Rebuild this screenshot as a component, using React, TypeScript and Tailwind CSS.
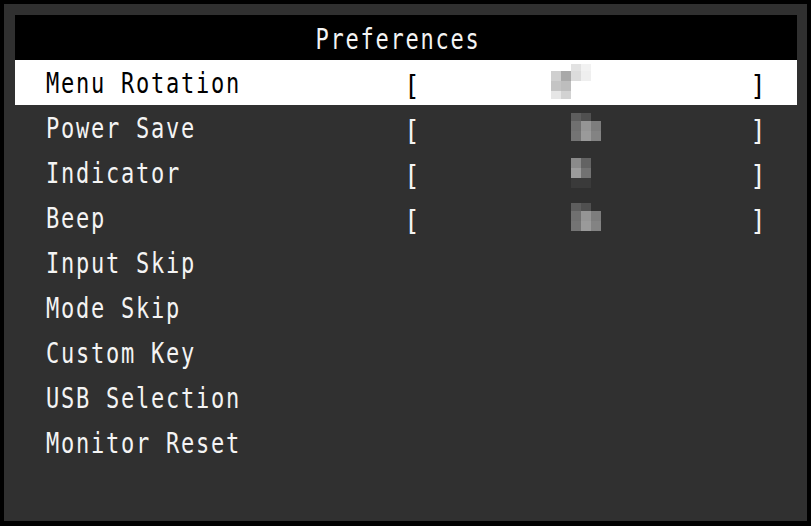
import React from 'react';

type Cell = [number, number, number, number, string];

// pixelated (censored) value previews, coords relative to a 50x36 box
const mosaics: Record<string, Cell[]> = {
  rotation: [
    [20, 0, 10, 7, '#e2e2e2'],
    [30, 0, 10, 7, '#f2f2f2'],
    [0, 7, 10, 10, '#cfcfcf'],
    [10, 7, 10, 10, '#a9a9a9'],
    [20, 7, 10, 10, '#dcdcdc'],
    [30, 7, 10, 10, '#efefef'],
    [0, 17, 10, 10, '#c4c4c4'],
    [10, 17, 10, 10, '#bdbdbd'],
    [0, 27, 10, 8, '#e6e6e6'],
    [10, 27, 10, 8, '#d2d2d2'],
  ],
  block3: [
    [0, 0, 10, 8, '#5e5e5e'],
    [10, 0, 10, 8, '#505050'],
    [0, 8, 10, 10, '#707070'],
    [10, 8, 10, 10, '#959595'],
    [20, 8, 10, 10, '#7d7d7d'],
    [0, 18, 10, 10, '#747474'],
    [10, 18, 10, 10, '#9a9a9a'],
    [20, 18, 10, 10, '#838383'],
  ],
  block2: [
    [0, 0, 10, 10, '#8a8a8a'],
    [10, 0, 10, 10, '#636363'],
    [0, 10, 10, 10, '#9c9c9c'],
    [10, 10, 10, 10, '#727272'],
    [0, 20, 20, 10, '#3a3a3a'],
  ],
};

const Mosaic = ({ kind }: { kind: string }) => (
  <svg width="50" height="36" viewBox="0 0 50 36" className="block">
    {mosaics[kind].map(([x, y, w, h, c], i) => (
      <rect key={i} x={x} y={y} width={w} height={h} fill={c} />
    ))}
  </svg>
);

const rows = [
  { label: 'Menu Rotation', value: 'rotation', mx: 'ml-[147px] mt-[4px]' },
  { label: 'Power Save', value: 'block3', mx: 'ml-[167px] mt-[8px]' },
  { label: 'Indicator', value: 'block2', mx: 'ml-[167px] mt-[8px]' },
  { label: 'Beep', value: 'block3', mx: 'ml-[167px] mt-[8px]' },
  { label: 'Input Skip' },
  { label: 'Mode Skip' },
  { label: 'Custom Key' },
  { label: 'USB Selection' },
  { label: 'Monitor Reset' },
];

const osd = "font-['DejaVu_Sans_Mono','Liberation_Mono',monospace]";

const Label = ({ children }: { children: React.ReactNode }) => (
  <span className={`inline-block translate-y-[2px] scale-y-[1.3] text-[22px] leading-none tracking-[1.76px] ${osd}`}>
    {children}
  </span>
);

const Bracket = ({ ch }: { ch: string }) => (
  <span className={`inline-block translate-y-[3px] scale-y-[1.12] text-[26px] leading-none ${osd}`}>{ch}</span>
);

export default function App() {
  return (
    <div className="w-[811px] h-[526px] bg-black pt-[4px] pb-[5px] px-[4px]">
      <div className="h-full bg-[#303030] pl-[11px] pr-[10px] pt-[11px]">
        <div className="h-[45px] bg-black text-[#f4f4f4] flex items-center justify-center pr-[16px]">
          <Label>Preferences</Label>
        </div>
        {rows.map((r, i) => (
          <div
            key={r.label}
            className={`h-[45px] flex items-center ${i === 0 ? 'bg-white text-black' : 'text-[#f4f4f4]'}`}
          >
            <div className="w-[389px] pl-[31px]">
              <Label>{r.label}</Label>
            </div>
            {r.value && (
              <div className="w-[362px] h-full flex items-center relative">
                <Bracket ch="[" />
                <div className={`absolute left-0 top-0 ${r.mx}`}>
                  <Mosaic kind={r.value} />
                </div>
                <div className="flex-1" />
                <Bracket ch="]" />
              </div>
            )}
          </div>
        ))}
      </div>
    </div>
  );
}
